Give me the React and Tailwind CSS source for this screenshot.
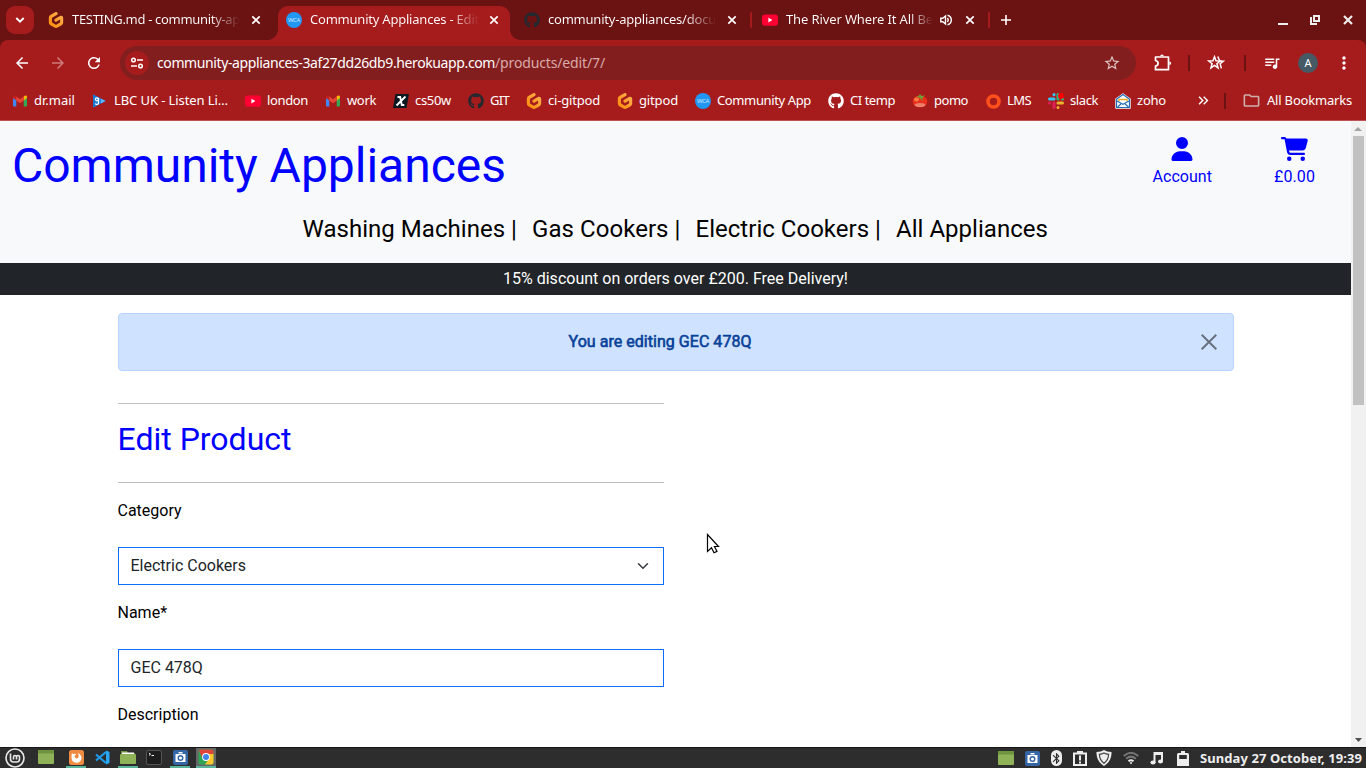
import React, { useLayoutEffect, useRef } from "react";
import {
  MdArrowBack, MdArrowForward, MdRefresh, MdStarBorder,
  MdOutlineQueueMusic, MdMoreVert, MdOutlineFolder,
  MdAdd, MdKeyboardDoubleArrowRight, MdBluetooth,
} from "react-icons/md";
import { FaGithub, FaUser, FaCartShopping } from "react-icons/fa6";
import { SiGitpod } from "react-icons/si";

// Text tracked so that it spans exactly w pixels.
function Fit({ w, className = "", children }) {
  const ref = useRef(null);
  useLayoutEffect(() => {
    const el = ref.current;
    el.style.letterSpacing = "0px";
    const n = el.textContent.length;
    el.style.letterSpacing = (w - el.getBoundingClientRect().width) / n + "px";
  }, [w]);
  return (
    <span className={"flex shrink-0 " + className} style={{ width: w }}>
      <span ref={ref} className="shrink-0 whitespace-pre">{children}</span>
    </span>
  );
}

function Gitpod() {
  return (
    <svg width="0" height="0" className="absolute">
      <linearGradient id="gp" x1="1" y1="0" x2="0" y2="1">
        <stop offset="0" stopColor="#ffb45b" />
        <stop offset="1" stopColor="#ff8a00" />
      </linearGradient>
    </svg>
  );
}
const GitpodIcon = () => <SiGitpod size={16} className="shrink-0 fill-[url(#gp)]" />;
const GitHubIcon = ({ className }) => <FaGithub size={16} className={"shrink-0 " + className} />;

const YouTube = () => (
  <svg width="16" height="16" viewBox="0 0 16 16" className="shrink-0">
    <rect y="2.4" width="16" height="11.4" rx="3" fill="#ff0033" />
    <path d="M6.4 5.8v4.6l4-2.3z" fill="#fff" />
  </svg>
);
const Gmail = () => (
  <svg width="16" height="16" viewBox="0 0 16 16" className="shrink-0">
    <path d="M1 5v7.5q0 1 1 1h2.300V6.500z" fill="#4285f4" />
    <path d="M15 5v7.500q0 1-1 1h-2.300V6.500z" fill="#34a853" />
    <path d="M11.700 3.500v4L15 5V4q-.2-2-2.300-1.300z" fill="#fbbc04" />
    <path d="M1 5V4q.2-2 2.300-1.300l1 .8v4z" fill="#c5221f" />
    <path d="M4.300 3.500v4L8 10.300l3.700-2.800v-4L8 6.300z" fill="#ea4335" />
  </svg>
);
const Wca = () => (
  <span className="flex h-4 w-4 shrink-0 items-center justify-center rounded-full bg-[#2196f3] text-[6px] leading-none tracking-[-0.3px] text-[#cfe8fc]">WCA</span>
);
const Lbc = () => (
  <svg width="16" height="16" viewBox="0 0 16 16" className="shrink-0">
    <path d="M1 1.500L13.500 8 1 14.500z" fill="#1e88f5" />
    <path d="M9 5.600L13.500 8 9 10.500z" fill="#58b4ff" />
    <path d="M1 1.500l7 3.600v6L1 14.500z" fill="#1976d2" />
    <circle cx="4.900" cy="6.300" r="1.500" fill="none" stroke="#fff" strokeWidth="1.300" />
    <path d="M6.500 5v5q0 1.500-1.600 1.500-1.300 0-1.600-1" fill="none" stroke="#fff" strokeWidth="1.300" />
  </svg>
);
const Cs50 = () => (
  <svg width="16" height="16" viewBox="0 0 16 16" className="shrink-0">
    <path d="M2.500 1H16l-2.500 14H0z" fill="#0c1820" />
    <path d="M4.500 4h2.700l1.600 8h2.500M12.500 3.500L3.500 12.500" fill="none" stroke="#fff" strokeWidth="1.900" />
  </svg>
);
const Tomato = () => (
  <svg width="16" height="16" viewBox="0 0 16 16" className="shrink-0">
    <ellipse cx="8" cy="8.500" rx="7.300" ry="6" fill="#e8301c" />
    <ellipse cx="8" cy="12" rx="5.500" ry="2" fill="#f0a08e" opacity=".7" />
    <ellipse cx="4.500" cy="6.500" rx="2.500" ry="2" fill="#ff7b45" />
    <path d="M8 5L3.500 3l3 .2L8 1l1.500 2 3.500-.4L10 5l1 3z" fill="#68a534" />
  </svg>
);
const Lms = () => (
  <svg width="16" height="16" viewBox="0 0 16 16" className="shrink-0">
    <circle cx="8.500" cy="8.500" r="5.500" fill="none" stroke="#ff4f1a" strokeWidth="3.600" />
  </svg>
);
const Slack = () => (
  <svg width="16" height="16" viewBox="0 0 16 16" className="shrink-0" strokeLinecap="round" strokeWidth="3">
    <path d="M1.500 6H6M6 1.500v.2" stroke="#36c5f0" />
    <path d="M10 1.500V6M14.500 6v0" stroke="#2eb67d" />
    <path d="M6 10v4.500M1.500 10v0" stroke="#e01e5a" />
    <path d="M10 10h4.500M10 14.500v0" stroke="#ecb22e" />
    <circle cx="13" cy="3" r="3" fill="#ff0000" />
  </svg>
);
const Zoho = () => (
  <svg width="16" height="16" viewBox="0 0 16 16" className="shrink-0">
    <path d="M1 6l7-5 7 5v9H1z" fill="#fff" stroke="#fff" strokeWidth="1.500" strokeLinejoin="round" />
    <path d="M1.500 6.200L8 1.500l6.500 4.700v8.300h-13z" fill="#fff" stroke="#226db4" strokeWidth="1.200" strokeLinejoin="round" />
    <path d="M4 8V6.500h8V8" fill="none" stroke="#f5ad27" strokeWidth="1.500" />
    <path d="M2 8l6 3.300L14 8M2.500 14l3.500-3M13.500 14L10 11" fill="none" stroke="#226db4" strokeWidth="1.100" />
  </svg>
);
const Cross = () => (
  <svg width="10" height="10" viewBox="0 0 10 10" className="ml-auto mr-px shrink-0"><path d="M1.300 1.300l7.400 7.400M8.700 1.300L1.300 8.700" stroke="#fff" strokeWidth="1.700" /></svg>
);
const Speaker = () => (
  <svg width="12" height="12" viewBox="0 0 12 12" className="ml-[7px] shrink-0" fill="none" stroke="#fff" strokeWidth="1.400">
    <path d="M.8 4.300h2L5.500 2v8L2.800 7.700h-2z" /><path d="M7.500 4q1.500 2 0 4M7.500 1.200q3.800 1 3.800 4.800t-3.800 4.800" />
  </svg>
);

const bookmarks = [
  [Gmail, "dr.mail", 41], [Lbc, "LBC UK - Listen Li…", 114], [YouTube, "london", 41], [Gmail, "work", 29],
  [Cs50, "cs50w", 36], [() => <GitHubIcon className="text-[#24292f]" />, "GIT", 19], [GitpodIcon, "ci-gitpod", 52],
  [GitpodIcon, "gitpod", 39], [Wca, "Community App", 94], [() => <GitHubIcon className="text-white" />, "CI temp", 45],
  [Tomato, "pomo", 34], [Lms, "LMS", 24], [Slack, "slack", 28], [Zoho, "zoho", 29],
];

function Tab({ icon, title, full, textW, className, fade, sound }) {
  return (
    <div className={"flex h-[34px] shrink-0 items-center " + className}>
      {icon}
      <div className={"ml-2 overflow-hidden bg-clip-text text-transparent bg-linear-to-r from-white to-transparent " + fade} style={{ width: textW }}>
        <Fit w={full}>{title}</Fit>
      </div>
      {sound && <Speaker />}
      <Cross />
    </div>
  );
}

function Browser() {
  return (
    <div className="h-[121px] shrink-0 bg-[#6b1212] font-['Noto_Sans',sans-serif] text-[13px] text-white">
      <div className="flex h-10 items-start pt-1.5">
        <div className="ml-1.5 flex h-7 w-7 shrink-0 items-center justify-center rounded-[9px] bg-[#a61c1d]">
          <svg width="10" height="8" viewBox="0 0 10 8" fill="none"><path d="M1.300 2L5 5.700 8.700 2" stroke="#fff" strokeWidth="1.900" /></svg>
        </div>
        <Tab icon={<GitpodIcon />} title="TESTING.md - community-ap" full={168} textW={168} fade="from-82%" className="ml-3.5 mt-[-3px] w-[214px]" />
        <div className="relative ml-4 flex h-[34px] w-[232px] shrink-0 rounded-t-[10px] bg-[#a61c1d] pl-2 pr-2.5 before:absolute before:-left-2.5 before:bottom-0 before:h-2.5 before:w-2.5 before:bg-[radial-gradient(circle_at_0_0,#6b1212_9.5px,#a61c1d_10px)] after:absolute after:-right-2.5 after:bottom-0 after:h-2.5 after:w-2.5 after:bg-[radial-gradient(circle_at_100%_0,#6b1212_9.5px,#a61c1d_10px)]">
          <Tab icon={<Wca />} title="Community Appliances - Edit" full={169} textW={169} fade="from-82%" className="mt-[-3px] w-[214px]" />
        </div>
        <Tab icon={<GitHubIcon className="text-[#24292f]" />} title="community-appliances/docu" full={168} textW={168} fade="from-82%" className="ml-3.5 mt-[-3px] w-[214px]" />
        <i className="ml-3 mt-1.5 h-4 w-0.5 shrink-0 rounded bg-[#a61c1d]" />
        <Tab icon={<YouTube />} title="The River Where It All Be" full={147} textW={147} sound fade="from-84%" className="ml-2.5 mt-[-3px] w-[214px]" />
        <i className="ml-3 mt-1.5 h-4 w-0.5 shrink-0 rounded bg-[#a61c1d]" />
        <svg width="10" height="10" viewBox="0 0 10 10" className="ml-[11px] mt-[9px] shrink-0"><path d="M5 0v10M0 5h10" stroke="#fff" strokeWidth="1.600" /></svg>
        <svg width="76" height="12" viewBox="0 0 76 12" className="ml-auto mr-3 mt-2 shrink-0">
          <path d="M0 9h10v2H0z" fill="#eee" />
          <path d="M33 3v7h6M36 2h5v5h-5z" fill="none" stroke="#eee" strokeWidth="2" />
          <path d="M66 2l8 8M74 2l-8 8" stroke="#eee" strokeWidth="2.200" />
        </svg>
      </div>
      <div className="h-[81px] rounded-t-lg border-b border-[#bd5355] bg-[#a61c1d]">
        <div className="flex h-[46px] items-center">
          <MdArrowBack size={18} className="ml-[13px] shrink-0" />
          <MdArrowForward size={18} className="ml-[18px] shrink-0 text-[#cf7b7b]" />
          <MdRefresh size={18} className="ml-[18px] shrink-0" />
          <div className="ml-[17px] flex h-[34px] w-[1016px] shrink-0 items-center rounded-full bg-[#831e1f] pl-[5px]">
            <div className="flex h-6 w-6 items-center justify-center rounded-full bg-[#a61c1d]">
              <svg width="14" height="14" viewBox="0 0 14 14" fill="none" stroke="#fff" strokeWidth="1.500">
                <circle cx="3.500" cy="4" r="1.800" /><path d="M7 4h6M1 10h6" /><circle cx="10.500" cy="10" r="1.800" />
              </svg>
            </div>
            <Fit w={338} className="ml-2 text-sm">community-appliances-3af27dd26db9.herokuapp.com</Fit>
            <Fit w={110} className="text-sm text-[#d9aaaa]">/products/edit/7/</Fit>
            <MdStarBorder size={18} className="ml-auto mr-[15px] text-[#e0c2c2]" />
          </div>
          <svg width="18" height="18" viewBox="0 0 18 18" className="ml-[18px] shrink-0" fill="none" stroke="#fff" strokeWidth="1.700">
            <path d="M1.500 3h13v12.700h-13v-3.500q2.600-.4 2.600-2.850T1.500 6.500z" strokeLinejoin="round" />
            <path d="M6.200 2.300q0-1.900 1.800-1.900t1.800 1.900zM15.300 7.500q1.900 0 1.900 1.800t-1.900 1.800z" fill="#fff" stroke="none" />
          </svg>
          <i className="ml-4 h-4 w-0.5 bg-[#6b1212]" />
          <svg width="18" height="16" viewBox="0 0 18 16" className="ml-[17px] shrink-0" fill="none" stroke="#fff" strokeWidth="1.500">
            <path d="M7.500 1.800l1.500 4 4.200.2-3.300 2.700 1.200 4.200-3.600-2.400-3.600 2.400 1.200-4.200L1.800 6 6 5.800z" />
            <path d="M10.800 1.500l1.700 4M12.500 6l3.800.1-3.200 2.600 1.300 4.700" />
          </svg>
          <i className="ml-[19px] h-4 w-0.5 bg-[#6b1212]" />
          <MdOutlineQueueMusic size={18} className="ml-[17px] shrink-0" />
          <div className="ml-[17px] flex h-5 w-5 shrink-0 items-center justify-center rounded-full bg-[#455a64] text-[11px]">A</div>
          <MdMoreVert size={20} className="ml-4 shrink-0" />
        </div>
        <div className="flex h-[29px] items-center pl-3 pr-3.5">
          <div className="flex gap-[17px]">
            {bookmarks.map(([Icon, label, w]) => (
              <div key={label} className="flex items-center gap-1.5"><Icon /><Fit w={w}>{label}</Fit></div>
            ))}
          </div>
          <MdKeyboardDoubleArrowRight size={17} className="ml-[29px] mr-auto shrink-0" />
          <i className="mr-4 h-4 w-0.5 bg-[#6b1212]" />
          <MdOutlineFolder size={19} className="mr-1.5 text-[#d0b0aa]" />
          <Fit w={85}>All Bookmarks</Fit>
        </div>
      </div>
    </div>
  );
}

function Page() {
  return (
    <main className="h-full w-[1351px] overflow-hidden bg-white font-[Roboto,sans-serif] text-base text-black">
      <header className="h-[142px] bg-[#f8f9fa] text-[#0000ff]">
        <div className="flex h-[88px]">
          <h1 className="ml-3 mt-4 text-5xl leading-[58px]"><Fit w={494}>Community Appliances</Fit></h1>
          <div className="ml-auto mr-9 mt-4 flex gap-[62px]">
            <div className="flex flex-col items-center"><FaUser size={24} /><Fit w={59.5} className="mt-1">Account</Fit></div>
            <div className="flex flex-col items-center"><FaCartShopping size={24} className="w-[27px]" /><Fit w={41} className="mt-1">£0.00</Fit></div>
          </div>
        </div>
        <nav className="ml-[302.500px] flex gap-[15px] pt-0.5 text-2xl leading-9 text-black">
          <Fit w={214.5}>Washing Machines |</Fit>
          <Fit w={148.5}>Gas Cookers |</Fit>
          <Fit w={185.5}>Electric Cookers |</Fit>
          <Fit w={152}>All Appliances</Fit>
        </nav>
      </header>
      <div className="flex h-8 justify-center bg-[#212529] leading-8 text-white"><Fit w={345}>15% discount on orders over £200. Free Delivery!</Fit></div>
      <div className="ml-[117.500px] w-[1116px] pt-[18px]">
        <div className="flex h-[58px] items-center justify-center rounded border border-[#b6d4fe] bg-[#cfe2ff] pr-4 text-[#084298]">
          <Fit w={183} className="ml-auto mr-[449px] font-normal [-webkit-text-stroke:0.6px_#084298]">You are editing GEC 478Q</Fit>
          <svg width="16" height="16" viewBox="0 0 16 16" className="shrink-0 text-[#687180]">
            <path d="M.7.7l14.600 14.600M15.300.7L.7 15.300" stroke="currentColor" strokeWidth="2" />
          </svg>
        </div>
        <div className="w-[546px] pt-8">
          <hr className="border-[#bfbfbf]" />
          <h2 className="flex h-[78px] items-center pb-2 text-[32px] text-[#0000ff]"><Fit w={174}>Edit Product</Fit></h2>
          <hr className="border-[#bfbfbf]" />
          <div className="h-16 pt-4">Category</div>
          <div className="flex h-[38px] items-center justify-between border border-[#0d6efd] pb-px pl-3 pr-3.5 text-[#212529]">
            Electric Cookers
            <svg width="12" height="12" viewBox="0 0 16 16" fill="none" stroke="#343a40" strokeWidth="2" strokeLinecap="round" strokeLinejoin="round" className="mt-px"><path d="M2 5l6 6 6-6" /></svg>
          </div>
          <div className="h-16 pt-4">Name*</div>
          <div className="flex h-[38px] items-center border border-[#0d6efd] pb-px pl-3 text-[#212529]">GEC 478Q</div>
          <div className="pt-4">Description</div>
        </div>
      </div>
    </main>
  );
}

const Win = () => (
  <svg width="16" height="14" viewBox="0 0 16 14"><rect width="16" height="14" rx="1" fill="#8fb158" /><path d="M0 0h16v3.500H0z" fill="#6f9440" /></svg>
);
const Camera = () => (
  <svg width="15" height="15" viewBox="0 0 15 15">
    <rect width="15" height="15" rx="2" fill="#3465a4" />
    <path d="M2.500 4h10v8h-10zM5.500 2h4v1.500h-4z" fill="#fff" /><circle cx="7.500" cy="8" r="2.300" fill="#fff" stroke="#3465a4" strokeWidth="1.400" />
  </svg>
);
const Firefox = () => (
  <svg width="15" height="15" viewBox="0 0 15 15">
    <rect width="15" height="15" rx="2.500" fill="#ef8b42" />
    <path d="M3 3q.5 1 1.500 1 2-.6 3 .6Q5 5 6 7.500q1 1.800 3 .6Q10.500 6 9 3q3.500 2 3.500 5a5 4.800 0 01-10 0Q2.400 5 3 3z" fill="#fff" />
  </svg>
);
const Code = () => (
  <svg width="15" height="15" viewBox="0 0 15 15">
    <path d="M1 4.500l10 8.500M1 10.500L11 2" stroke="#1f9cf0" strokeWidth="2.200" /><path d="M11 .5L14.500 2v11L11 14.500z" fill="#29a8f5" />
  </svg>
);
const Files = () => (
  <svg width="16" height="15" viewBox="0 0 16 15"><path d="M1 1h6l1.500 2H15v11H1z" fill="#6f9440" /><path d="M2 2.500h12V6H2z" fill="#fff" /><rect y="4" width="16" height="10" rx="1" fill="#8fb158" /></svg>
);
const Term = () => (
  <svg width="16" height="15" viewBox="0 0 16 15"><rect x=".5" y=".5" width="15" height="14" rx="1.500" fill="#1d1d1d" stroke="#555" /><path d="M3 3l1.500 1.200L3 5.400M5.500 5.500h2.500" stroke="#fff" fill="none" /></svg>
);
const Chrome = () => (
  <svg width="16" height="16" viewBox="0 0 16 16">
    <rect x=".5" y=".5" width="15" height="15" rx="2" fill="#2ea655" />
    <path d="M1 2Q1.500.5 3 .5h10.500q2 0 2 2V5H8L4.500 9z" fill="#e0453a" />
    <path d="M8 5h7.500v8q0 2.500-2.500 2.500H7L11.500 9z" fill="#fbc62c" />
    <circle cx="8" cy="8" r="3.900" fill="#fff" /><circle cx="8" cy="8" r="3" fill="#4285e8" />
  </svg>
);
const Mint = () => (
  <svg width="20" height="20" viewBox="0 0 20 20" fill="none" stroke="#e8e8e8">
    <circle cx="10" cy="10" r="9" strokeWidth="1.600" />
    <path d="M5.500 5.500V11q0 3 3 3h3.200q2.800 0 2.800-3V9q0-1.500-1.500-1.500T11.500 9v2.500M11.500 9q0-1.500-1.500-1.500T8.500 9v2.500" strokeWidth="1.600" />
  </svg>
);

function Launcher({ children, open, active }) {
  return (
    <div className={"flex h-5 w-5 items-center justify-center border-b-2 " + (open ? "border-[#5ab49a] " : "border-transparent ") + (active ? "bg-[#666]" : "")}>{children}</div>
  );
}

function Taskbar() {
  return (
    <footer className="flex h-[21px] shrink-0 items-center border-t border-[#171717] bg-[#2d2d2d]">
      <div className="ml-[5px] flex w-5"><Mint /></div>
      <div className="ml-[11px] flex">
        <Launcher><Win /></Launcher>
        <div className="ml-[10px] flex gap-1.5">
          <Launcher open><Firefox /></Launcher>
          <Launcher><Code /></Launcher>
          <Launcher open><Files /></Launcher>
          <Launcher><Term /></Launcher>
          <Launcher open><Camera /></Launcher>
          <Launcher open active><Chrome /></Launcher>
        </div>
      </div>
      <div className="ml-auto mr-[11px] flex items-center text-[#eee]">
        <Win />
        <span className="ml-[11px]"><Camera /></span>
        <span className="ml-[11px] flex h-4 w-[11px] items-center justify-center rounded-full bg-[#eee] text-[#2d2d2d]"><MdBluetooth size={13} className="shrink-0" /></span>
        <svg width="14" height="16" viewBox="0 0 14 16" className="ml-[11px]" fill="none" stroke="#eee" strokeWidth="2"><path d="M1 3.500h12V15H1zM4 2h6M7 5.500v5M7 11.500v2" /></svg>
        <svg width="16" height="16" viewBox="0 0 16 16" className="ml-[9px]"><path d="M8 0q3 2 7.500 2Q16 11 8 16 0 11 .5 2 5 2 8 0z" fill="#eee" /><path d="M8 3q2 1.200 4.600 1.300Q12.500 10 8 13.200 3.500 10 3.400 4.300 6 4.200 8 3z" fill="#eee" stroke="#444" strokeWidth="1.200" /></svg>
        <svg width="16" height="14" viewBox="0 0 16 14" className="ml-[11px]" fill="none" stroke="#777" strokeWidth="2"><path d="M.8 5q7.200-6.500 14.400 0M3.200 7.800q4.800-4.300 9.600 0" /><path d="M5.500 10.300q2.500-2.100 5 0" stroke="#eee" /><circle cx="8" cy="12" r="1" fill="#eee" stroke="none" /></svg>
        <svg width="13" height="14" viewBox="0 0 13 14" className="ml-[11px]" fill="#eee"><path d="M3.500 1H13v9.500h-2V4H5.500v8h-2z" /><ellipse cx="3" cy="11.500" rx="2.600" ry="1.900" /><ellipse cx="10.500" cy="10.500" rx="2.500" ry="1.900" /></svg>
        <svg width="12" height="15" viewBox="0 0 12 15" className="ml-[14px]"><path d="M4 0h4v2h2.500q1.500 0 1.500 1.500V15H0V3.500Q0 2 1.500 2H4z" fill="#eee" /><path d="M2.200 4h7.600v4H2.200z" fill="#2d2d2d" /></svg>
      </div>
      <Fit w={162} className="mr-1 font-['Noto_Sans',sans-serif] text-[13px] font-bold leading-5 text-[#eee]">Sunday 27 October, 19:39</Fit>
    </footer>
  );
}

export default function App() {
  return (
    <div className="relative flex h-screen w-[1366px] flex-col overflow-hidden bg-white">
      <Gitpod />
      <Browser />
      <div className="flex min-h-0 flex-1">
        <Page />
        <div className="flex w-[15px] flex-col items-center bg-[#f1f1f1]">
          <svg width="15" height="15" viewBox="0 0 15 15"><path d="M3 10h8L7 6z" fill="#a3a3a3" /></svg>
          <div className="mr-px h-[269px] w-[11px] bg-[#c1c1c1]" />
          <svg width="15" height="15" viewBox="0 0 15 15" className="mt-auto"><path d="M4 6h7l-3.500 4z" fill="#505050" /></svg>
        </div>
      </div>
      <Taskbar />
      <svg width="14" height="22" viewBox="0 0 14 22" className="absolute left-[706px] top-[533px]">
        <path d="M1.500 1.500v17l4-3.700 2.500 5 3-1.400-2.500-4.900h4z" fill="#fff" stroke="#000" strokeWidth="1.200" />
      </svg>
    </div>
  );
}
